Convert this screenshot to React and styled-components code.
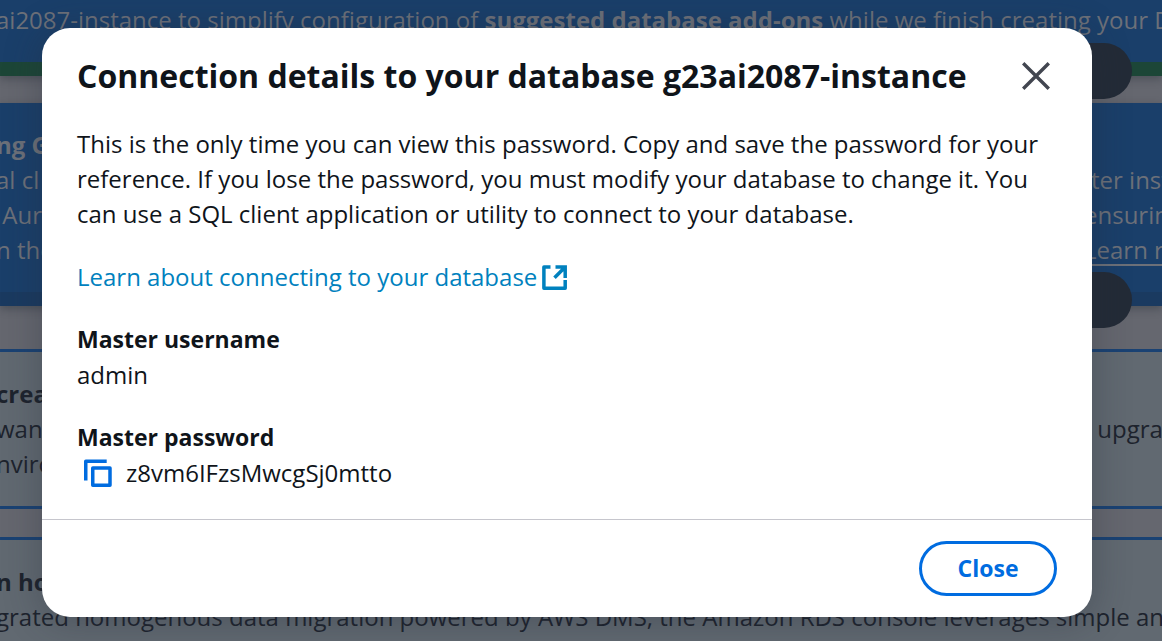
import React from "react";
import styled, { createGlobalStyle } from "styled-components";

const GlobalStyle = createGlobalStyle`
  * { box-sizing: border-box; }
  body {
    margin: 0;
    background: #65676f;
    color: #0f141a;
    font-family: "Open Sans", "Noto Sans", sans-serif;
    font-size: 24px;
    line-height: 35px;
  }
`;

const Page = styled.div`
  position: relative;
  min-height: 100vh;
  overflow: hidden;
`;

const Console = styled.div`
  height: 100vh;
  min-height: 100%;
  overflow: hidden;
  white-space: nowrap;
`;

const Notice = styled.div`
  position: relative;
  height: ${(p) => p.$height}px;
  padding-top: ${(p) => p.$top}px;
  margin-bottom: ${(p) => p.$gap}px;
  background: #1a3f6a;
  color: #6c7079;
  border-bottom: 14px solid ${(p) => p.$edge};
  box-shadow: 0 3px 8px rgba(30, 36, 46, 0.35);
`;

const Line = styled.div`
  display: flex;
  justify-content: space-between;
  margin-left: -4px;
  height: 35px;
  font-weight: ${(p) => (p.$strong ? 700 : 400)};
`;

const Tail = styled.span`
  flex: 0 0 ${(p) => (p.$wide ? 78 : 71)}px;
  min-width: 0;
`;

const TailLink = styled.a`
  flex: 0 0 78px;
  min-width: 0;
  height: 34px;
  color: inherit;
  text-decoration: none;
  border-bottom: 2px solid #6c7079;
`;

const Dismiss = styled.button`
  position: absolute;
  right: 30px;
  bottom: ${(p) => p.$bottom}px;
  width: 112px;
  height: 56px;
  border: 0;
  border-radius: 28px;
  background: #232b37;
`;

const Panel = styled.section`
  height: 160px;
  margin-bottom: 28px;
  padding-top: 24px;
  border: solid #1a4273;
  border-width: 3px 0;
  background: #616971;
  color: #1d232d;
`;

const Overlay = styled.div`
  position: absolute;
  inset: 0;
  padding: 28px 70px 24px 42px;
`;

const Dialog = styled.div`
  border-radius: 28px;
  background: #fff;
  box-shadow: 0 4px 35px 4px rgba(35, 43, 55, 0.3);
`;

const Header = styled.header`
  display: flex;
  align-items: center;
  justify-content: space-between;
  padding: 27px 36px 22px 35px;
`;

const Title = styled.h1`
  margin: 0;
  font-size: 32px;
  line-height: 42px;
  font-weight: 700;
  white-space: nowrap;
`;

const IconButton = styled.button`
  display: flex;
  padding: 0 6px;
  border: 0;
  background: none;
  color: #424650;
`;

const Body = styled.div`
  display: flex;
  flex-direction: column;
  gap: 28px;
  padding: 7px 35px 29px;
`;

const Text = styled.p`
  margin: 0;
  white-space: nowrap;
`;

const DocLink = styled.a`
  display: flex;
  align-items: center;
  gap: 4px;
  color: #0081be;
  text-decoration: none;
`;

const Field = styled.dl`
  margin: 0;
`;

const Label = styled.dt`
  font-size: 23px;
  font-weight: 700;
`;

const Value = styled.dd`
  display: flex;
  align-items: center;
  gap: 14px;
  margin: 0;
`;

const CopyButton = styled.button`
  display: flex;
  padding: 0 0 0 7px;
  border: 0;
  background: none;
  color: #006ce0;
`;

const Footer = styled.footer`
  display: flex;
  justify-content: flex-end;
  padding: 21px 35px;
  border-top: 1px solid #c6c6cd;
`;

const CloseButton = styled.button`
  width: 138px;
  height: 55px;
  padding: 0;
  border: 3px solid #006ce0;
  border-radius: 28px;
  background: #fff;
  color: #006ce0;
  font: inherit;
  font-size: 23px;
  font-weight: 700;
`;

const CloseIcon = () => (
  <svg width="28" height="28" viewBox="0 0 28 28" fill="none" stroke="currentColor" strokeWidth="3.4" aria-hidden="true">
    <path d="M1.2 1.2 26.8 26.8M26.8 1.2 1.2 26.8" />
  </svg>
);

const ExternalIcon = () => (
  <svg width="28" height="28" viewBox="0 0 28 28" fill="none" stroke="currentColor" strokeWidth="3.5" aria-hidden="true">
    <path d="M9.5 3.9H2.9V25.2H24.2v-8.2" strokeLinejoin="round" />
    <path d="M14.5 3.9h9.7v11M24.2 3.9 13.5 14.8" />
  </svg>
);

const CopyIcon = () => (
  <svg width="28" height="28" viewBox="0 0 28 28" fill="none" stroke="currentColor" strokeWidth="3.5" strokeLinejoin="round" aria-hidden="true">
    <path d="M1.75 21.5V2.25H22.7" />
    <rect x="8.75" y="9" width="17.25" height="17.25" />
  </svg>
);

export default function App() {
  return (
    <Page>
      <GlobalStyle />
      <Console aria-hidden="true">
        <Notice $height={76} $top={2} $gap={27} $edge="#1c4637">
          <Line>
            <span>
              ai2087-instance to simplify configuration of <b>suggested database add-ons</b> while we finish creating your D
            </span>
          </Line>
          <Dismiss $bottom={-37} tabIndex={-1} />
        </Notice>
        <Notice $height={203} $top={24} $gap={43} $edge="#1a3a60">
          <Line $strong>ng G</Line>
          <Line>
            <span>al cl</span>
            <Tail>ter inst</Tail>
          </Line>
          <Line>
            <span>&nbsp;Aur</span>
            <Tail $wide>ensurin</Tail>
          </Line>
          <Line>
            <span>n the</span>
            <TailLink href="#learn" tabIndex={-1}>Learn r</TailLink>
          </Line>
          <Dismiss $bottom={-36} tabIndex={-1} />
        </Notice>
        <Panel>
          <Line $strong>crea</Line>
          <Line>
            <span>want</span>
            <Tail>&nbsp;upgra</Tail>
          </Line>
          <Line>nviro</Line>
        </Panel>
        <Panel>
          <Line $strong>n hom</Line>
          <Line>
            grated homogenous data migration powered by AWS DMS, the Amazon RDS console leverages simple and
          </Line>
        </Panel>
      </Console>
      <Overlay>
        <Dialog role="dialog" aria-modal="true" aria-labelledby="dialog-title">
          <Header>
            <Title id="dialog-title">Connection details to your database g23ai2087-instance</Title>
            <IconButton aria-label="Close dialog">
              <CloseIcon />
            </IconButton>
          </Header>
          <Body>
            <Text>
              This is the only time you can view this password. Copy and save the password for your
              <br />
              reference. If you lose the password, you must modify your database to change it. You
              <br />
              can use a SQL client application or utility to connect to your database.
            </Text>
            <DocLink href="#connect">
              Learn about connecting to your database
              <ExternalIcon />
            </DocLink>
            <Field>
              <Label>Master username</Label>
              <Value>admin</Value>
            </Field>
            <Field>
              <Label>Master password</Label>
              <Value>
                <CopyButton aria-label="Copy password">
                  <CopyIcon />
                </CopyButton>
                <span>z8vm6IFzsMwcgSj0mtto</span>
              </Value>
            </Field>
          </Body>
          <Footer>
            <CloseButton>Close</CloseButton>
          </Footer>
        </Dialog>
      </Overlay>
    </Page>
  );
}
